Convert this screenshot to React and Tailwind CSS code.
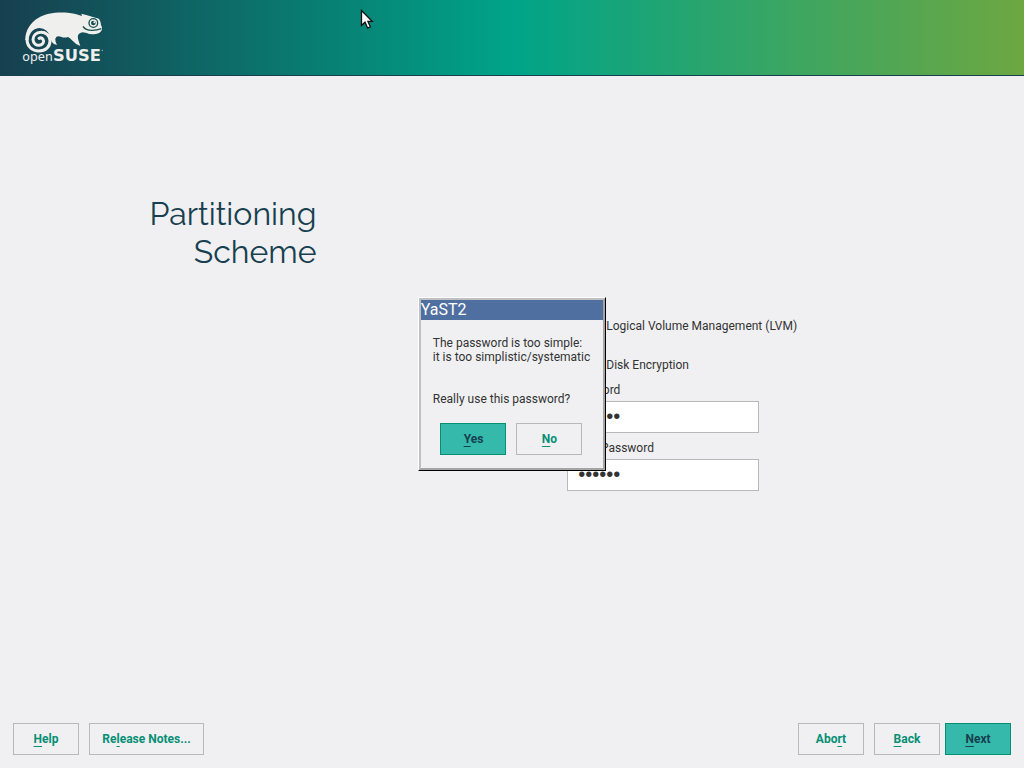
import React, { useState } from "react";

function Button({ children, primary, wide, ...rest }) {
  return (
    <button
      type="button"
      className={
        "h-8 border text-xs font-bold leading-4 " +
        (wide ? "w-[115px] " : "w-[66px] ") +
        (primary
          ? "border-[#058f75] bg-[#35b9ab] text-[#173f4f]"
          : "border-[#b8b8ba] bg-[#f0f0f2] text-[#058f75]")
      }
      {...rest}
    >
      {children}
    </button>
  );
}

function Key({ children }) {
  return <span className="underline decoration-1 underline-offset-[3px]">{children}</span>;
}

function Logo() {
  return (
    <svg width="84" height="56" viewBox="0 0 252 168" role="img" aria-label="openSUSE">
      <g transform="translate(-36 -36)">
        <path
          fill="#efefee"
          d="M46 120 C45 93 61 67 86 53 C112 36 165 33 199 43 L216 48 L214 41 Q233 46 246 50 L267 56 Q273 66 273 75 Q278 84 275 91 Q271 100 257 102 Q239 104 230 99 L218 97 Q206 99 204 107 C202 115 207 125 211 138 Q195 132 186 121 Q180 113 174 111 Q163 115 153 110 Q139 106 136 116 Q135 124 141 135 Q129 132 125 125 L121 112 Q113 85 88 84 C67 85 56 103 56 121 Z"
        />
        <path
          fill="none"
          stroke="#efefee"
          strokeWidth="9"
          strokeLinecap="round"
          d="M51 117 C51 141 68 153 87 153 C107 153 120 140 120 123 C120 106 106 96 92 97 C78 97 69 107 69 119 C70 131 79 137 88 136 C99 135 104 125 99 118 Q94 111 87 115"
        />
        <circle cx="250" cy="69" r="13" fill="#efefee" stroke="#17504f" strokeWidth="4" />
        <circle cx="250" cy="69" r="7" fill="#17504f" />
        <circle cx="253" cy="67" r="3" fill="#efefee" />
        <path fill="none" stroke="#17504f" strokeWidth="4" d="M219 79 Q226 91 246 91 Q262 91 274 86" />
        <text x="37" y="183" fontSize="38" fill="#efefee" className="font-['Noto_Sans',sans-serif]">open</text>
        <text x="129" y="184" fontSize="49" fontWeight="700" fill="#efefee" className="font-['DejaVu_Sans',sans-serif]">SUSE</text>
        <circle cx="277" cy="151" r="2" fill="#b6c9c8" />
      </g>
    </svg>
  );
}

function Pointer() {
  return (
    <svg className="absolute left-[360px] top-[9px]" width="14" height="21" viewBox="0 0 14 21" aria-hidden="true">
      <path d="M1.5 1.5 V16.5 L5 13.2 L7.6 19 L10.3 17.8 L7.9 12.3 H12.2 Z" fill="#fff" stroke="#101010" strokeWidth="1.3" />
    </svg>
  );
}

function PasswordField({ id, label }) {
  const [value, setValue] = useState("secret");
  return (
    <div className="flex flex-col gap-1">
      <label htmlFor={id}>{label}</label>
      <input
        id={id}
        type="password"
        value={value}
        onChange={(e) => setValue(e.target.value)}
        className="h-8 w-48 border border-[#b8b8ba] bg-white px-[10px] font-['Liberation_Sans',sans-serif] text-xl outline-none"
      />
    </div>
  );
}

function Dialog({ onClose }) {
  return (
    <div className="fixed inset-0 flex items-center justify-center">
      <div
        role="dialog"
        aria-labelledby="dialog-title"
        className="border border-t-white border-l-white border-r-black border-b-black bg-[#f0f0f2]"
      >
        <div className="border-2 border-[#c0c0c0] border-r-[#a5a5a5] border-b-[#a5a5a5]">
          <h2 id="dialog-title" className="bg-[#4f6fa0] text-base leading-5 text-white">YaST2</h2>
          <div className="pt-4 pr-[13px] pb-[13px] pl-3">
            <p>
              The password is too simple:
              <br />
              it is too simplistic/systematic
            </p>
            <p className="pt-7">Really use this password?</p>
            <div className="flex justify-center gap-[10px] pt-[17px]">
              <Button primary onClick={onClose}><Key>Y</Key>es</Button>
              <Button onClick={onClose}><Key>N</Key>o</Button>
            </div>
          </div>
        </div>
      </div>
    </div>
  );
}

export default function App() {
  const [open, setOpen] = useState(true);
  return (
    <div className="flex min-h-screen flex-col bg-[#f0f0f2] font-['Roboto',sans-serif] text-xs leading-[14px] text-[#333]">
      <header className="h-[76px] border-b border-[#173f4f] bg-[linear-gradient(to_right,#173f4f,#00a489_50%,#6da741)] px-[22px] pt-3">
        <Logo />
      </header>
      <main className="grid flex-1 grid-cols-[4fr_9fr] gap-6 pr-3 pl-[18px]">
        <h1 className="pt-[119px] text-right font-['Raleway','Lato',sans-serif] text-[32px] leading-[38px] text-[#173f4f]">
          Partitioning
          <br />
          Scheme
        </h1>
        <div className="flex items-center justify-center pt-[10px] pr-[10px]">
          <form className="flex flex-col">
            <label className="flex items-center gap-2">
              <input type="checkbox" defaultChecked className="size-[14px]" />
              Enable Logical Volume Management (LVM)
            </label>
            <label className="flex items-center gap-2 pt-[25px]">
              <input type="checkbox" defaultChecked className="size-[14px]" />
              Enable Disk Encryption
            </label>
            <div className="flex flex-col gap-2 pt-[11px] pl-[22px]">
              <PasswordField id="password" label="Password" />
              <PasswordField id="verify" label="Verify Password" />
            </div>
          </form>
        </div>
      </main>
      <footer className="flex justify-between px-[13px] pb-[13px]">
        <div className="flex gap-[10px]">
          <Button><Key>H</Key>elp</Button>
          <Button wide>Re<Key>l</Key>ease Notes...</Button>
        </div>
        <div className="flex gap-[5px]">
          <div className="flex gap-[10px]">
            <Button>Abo<Key>r</Key>t</Button>
            <Button><Key>B</Key>ack</Button>
          </div>
          <Button primary><Key>N</Key>ext</Button>
        </div>
      </footer>
      {open && <Dialog onClose={() => setOpen(false)} />}
      <Pointer />
    </div>
  );
}
